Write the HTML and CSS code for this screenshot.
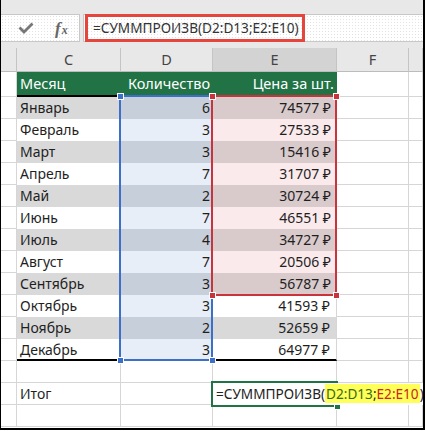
FILE: index.html
```html
<!DOCTYPE html>
<html lang="ru">
<head>
    <meta charset="UTF-8">
    <title>СУММПРОИЗВ</title>
    <link rel="stylesheet" href="styles.css">
</head>
<body>
<div class="shot">
    <!-- Formula bar -->
    <div class="formula-bar">
        <div class="fx-tools">
            <svg class="check" width="16" height="12" viewBox="0 0 16 12">
                <polyline points="1.5,5.5 6,10 14.5,1.5" fill="none" stroke="#777" stroke-width="2.8"/>
            </svg>
            <span class="fx">f<small>x</small></span>
        </div>
        <div class="fx-input">
            <span class="fx-text">=СУММПРОИЗВ(D2:D13;E2:E10)</span>
        </div>
    </div>

    <!-- Sheet -->
    <div class="sheet">
        <div class="row col-heads">
            <div class="cell"></div>
            <div class="cell">C</div>
            <div class="cell">D</div>
            <div class="cell sel">E</div>
            <div class="cell">F</div>
            <div class="cell"></div>
        </div>
        <div class="row table-head">
            <div class="cell rh"></div>
            <div class="cell th">Месяц</div>
            <div class="cell th num">Количество</div>
            <div class="cell th num">Цена за шт.</div>
            <div class="cell blank"></div>
            <div class="cell blank"></div>
        </div>

        <div class="row band">
            <div class="cell rh"></div><div class="cell month">Январь</div><div class="cell qty">6</div><div class="cell price hl">74577 ₽</div><div class="cell blank"></div><div class="cell blank"></div>
        </div>
        <div class="row">
            <div class="cell rh"></div><div class="cell month">Февраль</div><div class="cell qty">3</div><div class="cell price hl">27533 ₽</div><div class="cell blank"></div><div class="cell blank"></div>
        </div>
        <div class="row band">
            <div class="cell rh"></div><div class="cell month">Март</div><div class="cell qty">3</div><div class="cell price hl">15416 ₽</div><div class="cell blank"></div><div class="cell blank"></div>
        </div>
        <div class="row">
            <div class="cell rh"></div><div class="cell month">Апрель</div><div class="cell qty">7</div><div class="cell price hl">31707 ₽</div><div class="cell blank"></div><div class="cell blank"></div>
        </div>
        <div class="row band">
            <div class="cell rh"></div><div class="cell month">Май</div><div class="cell qty">2</div><div class="cell price hl">30724 ₽</div><div class="cell blank"></div><div class="cell blank"></div>
        </div>
        <div class="row">
            <div class="cell rh"></div><div class="cell month">Июнь</div><div class="cell qty">7</div><div class="cell price hl">46551 ₽</div><div class="cell blank"></div><div class="cell blank"></div>
        </div>
        <div class="row band">
            <div class="cell rh"></div><div class="cell month">Июль</div><div class="cell qty">4</div><div class="cell price hl">34727 ₽</div><div class="cell blank"></div><div class="cell blank"></div>
        </div>
        <div class="row">
            <div class="cell rh"></div><div class="cell month">Август</div><div class="cell qty">7</div><div class="cell price hl">20506 ₽</div><div class="cell blank"></div><div class="cell blank"></div>
        </div>
        <div class="row band">
            <div class="cell rh"></div><div class="cell month">Сентябрь</div><div class="cell qty">3</div><div class="cell price hl">56787 ₽</div><div class="cell blank"></div><div class="cell blank"></div>
        </div>
        <div class="row">
            <div class="cell rh"></div><div class="cell month">Октябрь</div><div class="cell qty">3</div><div class="cell price">41593 ₽</div><div class="cell blank"></div><div class="cell blank"></div>
        </div>
        <div class="row band">
            <div class="cell rh"></div><div class="cell month">Ноябрь</div><div class="cell qty">2</div><div class="cell price">52659 ₽</div><div class="cell blank"></div><div class="cell blank"></div>
        </div>
        <div class="row last">
            <div class="cell rh"></div><div class="cell month">Декабрь</div><div class="cell qty">3</div><div class="cell price">64977 ₽</div><div class="cell blank"></div><div class="cell blank"></div>
        </div>

        <div class="row">
            <div class="cell rh"></div><div class="cell blank"></div><div class="cell blank"></div><div class="cell blank"></div><div class="cell blank"></div><div class="cell blank"></div>
        </div>
        <div class="row">
            <div class="cell rh"></div><div class="cell blank month">Итог</div><div class="cell blank"></div><div class="cell blank"></div><div class="cell blank"></div><div class="cell blank"></div>
        </div>
        <div class="row">
            <div class="cell rh"></div><div class="cell blank"></div><div class="cell blank"></div><div class="cell blank"></div><div class="cell blank"></div><div class="cell blank"></div>
        </div>
    </div>

    <!-- Formula ranges -->
    <div class="range range-d"></div>
    <div class="range range-e"></div>
    <div class="handle blue" style="left:116px; top:93px;"></div>
    <div class="handle blue" style="left:116px; top:357px;"></div>
    <div class="handle blue" style="left:208px; top:357px;"></div>
    <div class="handle red" style="left:208px; top:93px;"></div>
    <div class="handle red" style="left:332px; top:93px;"></div>
    <div class="handle red" style="left:208px; top:292px;"></div>
    <div class="handle red" style="left:332px; top:292px;"></div>

    <!-- Cell in edit mode -->
    <div class="active"></div>
    <div class="handle green" style="left:333px; top:403px;"></div>
    <div class="editor">=СУММПРОИЗВ(<span class="mark"><span class="ref-d">D2:D13</span>;<span class="ref-e">E2:E10</span></span>)<span class="caret"></span></div>
</div>
</body>
</html>
```

FILE: styles.css
```css
body {
    margin: 0;
    background: #fff;
    font-family: "Noto Sans", sans-serif;
    color: #1f1f1f;
}
.shot {
    position: relative;
    width: 422px;
    height: 428px;
    border: solid #000;
    border-width: 0 2px 2px 1px;
    background: #fff;
    overflow: hidden;
}

/* formula bar */
.formula-bar {
    height: 48px;
    box-sizing: border-box;
    padding-top: 14px;
    background: #e8e8e8;
    display: flex;
    align-items: flex-start;
    gap: 3px;
}
.fx-tools, .fx-input {
    height: 28px;
    box-sizing: border-box;
    border: 1px solid #c8c8c8;
    background: #fff radial-gradient(circle, #e2e2e2 0.7px, transparent 0.9px) 0 0 / 3px 3px;
    display: flex;
    align-items: center;
}
.fx-tools {
    width: 79px;
    border-left: none;
    padding-left: 17px;
    gap: 21px;
}
.fx {
    font-family: "Liberation Serif", serif;
    font-style: italic;
    font-weight: bold;
    font-size: 17px;
    color: #666;
    line-height: 1;
}
.fx small {
    font-size: 12px;
    margin-left: 1px;
}
.fx-input {
    flex: 1;
    border-right: none;
}
.fx-text {
    box-sizing: border-box;
    width: 220px;
    height: 28px;
    margin: 0 0 0 1px;
    border: 3px solid #e5453d;
    padding-left: 5px;
    font-size: 13.6px;
    line-height: 21px;
    color: #333;
    white-space: nowrap;
}

/* sheet grid */
.row {
    display: grid;
    grid-template-columns: 16px 104px 92px 124px 72px 1fr;
    height: 22px;
    font-size: 14px;
    line-height: 22px;
}
.cell {
    box-sizing: border-box;
    overflow: hidden;
    white-space: nowrap;
}
.col-heads {
    height: 24px;
    line-height: 23px;
    font-size: 14.5px;
    color: #444;
}
.col-heads .cell {
    background: #e8e8e8;
    border-right: 1px solid #c4c4c4;
    border-bottom: 1px solid #bcbcbc;
    text-align: center;
}
.col-heads .cell.sel {
    background: #d3d3d3;
}
.table-head {
    height: 25px;
    font-size: 14.5px;
    line-height: 23px;
}
.th {
    background: #217346;
    color: #fff;
    padding: 0 3px;
    border-bottom: 2px solid #000;
}
.th.num {
    text-align: right;
}
.rh, .blank {
    border-right: 1px solid #d6d6d6;
    border-bottom: 1px solid #d6d6d6;
}
.month {
    padding-left: 3px;
}
.qty {
    text-align: right;
    padding-right: 3px;
    background: #e8eef8;
}
.price {
    text-align: right;
    padding-right: 6px;
    border-right: 1px solid #d6d6d6;
}
.price.hl {
    background: #faeaeb;
    border-right: none;
}
.band .month, .band .price {
    background: #d9d9d9;
}
.band .qty {
    background: #c7cfda;
}
.band .price.hl {
    background: #d9cacb;
}
.last .month, .last .qty, .last .price {
    border-bottom: 2px solid #000;
}

/* formula ranges */
.range {
    position: absolute;
    box-sizing: border-box;
    border: 2px solid;
}
.range-d {
    left: 118px;
    top: 95px;
    width: 94px;
    height: 266px;
    border-color: #3c6fc8;
}
.range-e {
    left: 210px;
    top: 95px;
    width: 126px;
    height: 201px;
    border-color: #c9343c;
}
.handle {
    position: absolute;
    width: 5px;
    height: 5px;
    border: 1px solid #fff;
}
.handle.blue { background: #3c6fc8; }
.handle.red { background: #c9343c; }
.handle.green { background: #217346; }

/* edit mode */
.active {
    position: absolute;
    left: 210px;
    top: 381px;
    width: 127px;
    height: 26px;
    box-sizing: border-box;
    border: 2px solid #217346;
}
.editor {
    position: absolute;
    left: 212px;
    top: 383px;
    width: 210px;
    height: 22px;
    box-sizing: border-box;
    padding-left: 3px;
    background: #fff;
    font-size: 13.6px;
    line-height: 22px;
    color: #222;
    white-space: nowrap;
    overflow: hidden;
}
.mark {
    background: #ffff59;
    padding: 0 1px;
}
.ref-d { color: #3a6a14; }
.ref-e { color: #c8261e; }
.caret {
    display: inline-block;
    width: 1px;
    height: 17px;
    margin-left: 1px;
    vertical-align: -3px;
    background: #000;
}
```
